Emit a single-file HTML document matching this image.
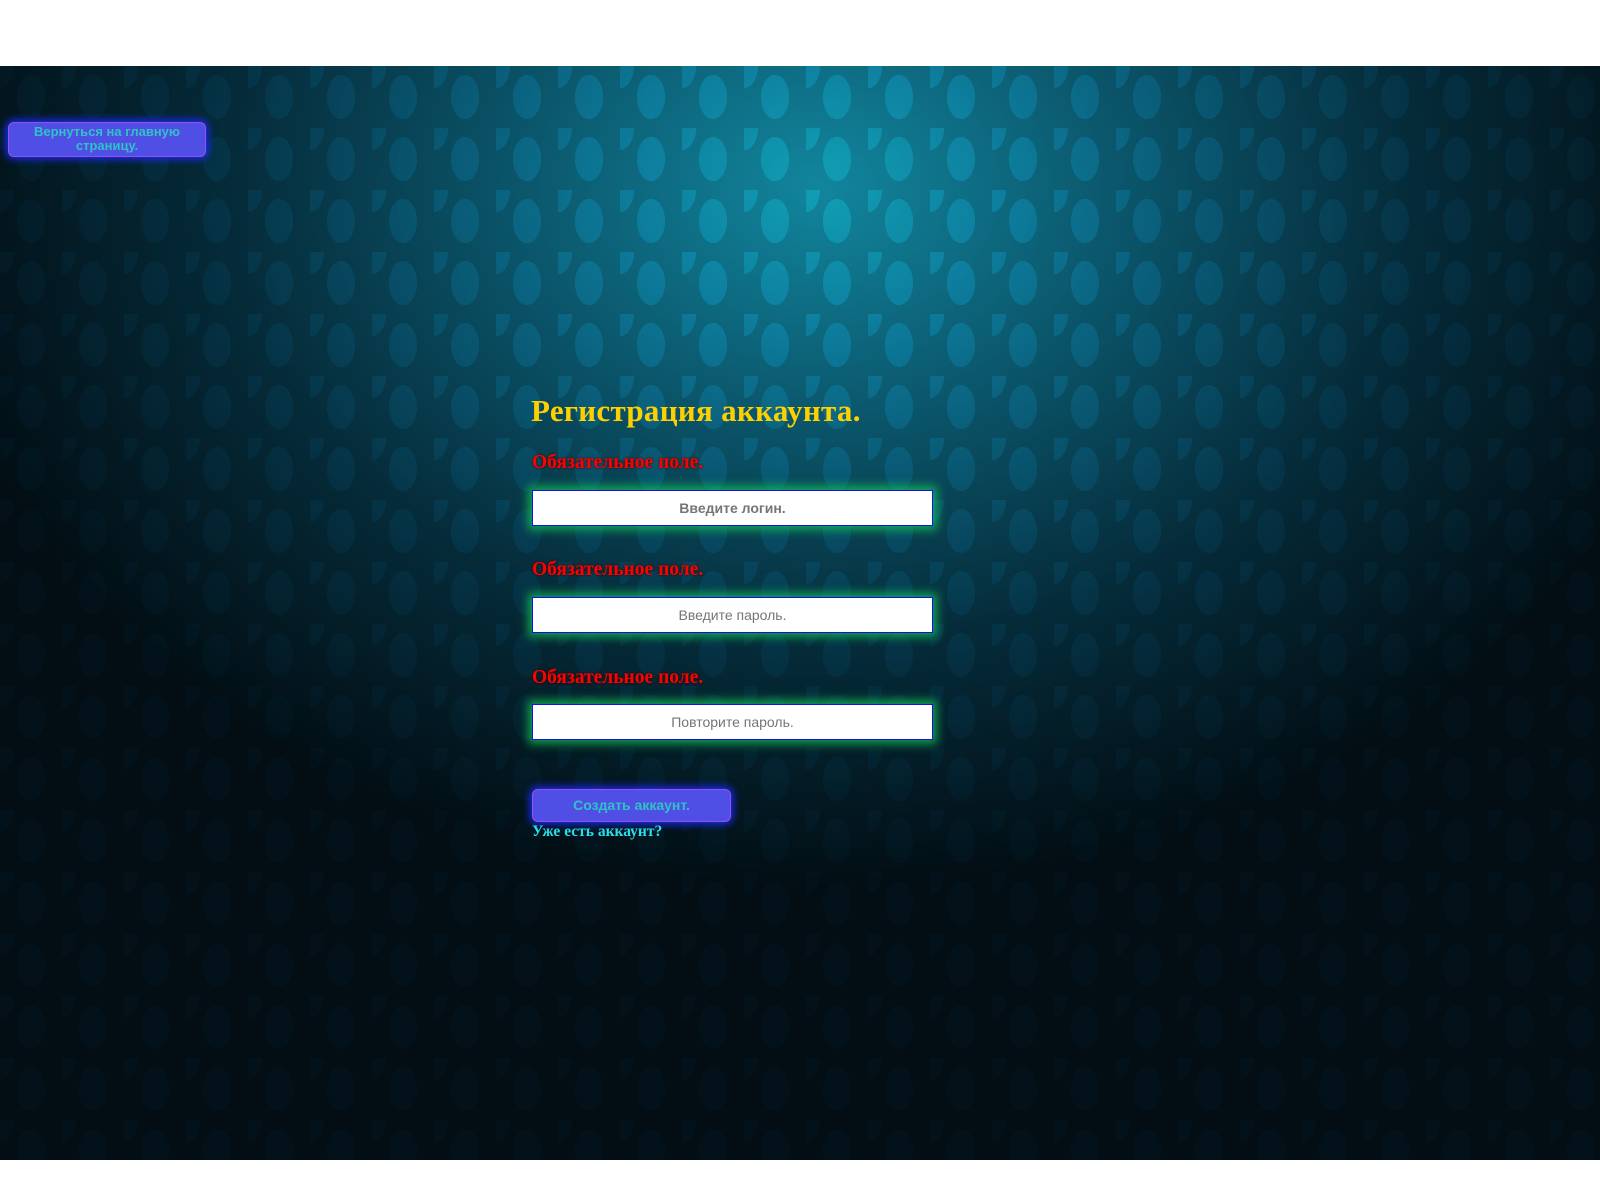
<!DOCTYPE html>
<html><head><meta charset="utf-8"><style>
html,body{margin:0;padding:0;width:1600px;height:1200px;background:#fff;overflow:hidden;position:relative}
.bg{position:absolute;left:0;top:66px;width:1600px;height:1094px;
background:
radial-gradient(ellipse 900px 700px at 820px 120px, rgba(18,140,165,0.95) 0%, rgba(12,95,118,0.85) 35%, rgba(6,50,66,0.8) 65%, rgba(2,14,20,0.95) 100%),
#02121a;}
.pat{position:absolute;left:0;top:66px;width:1600px;height:1094px;opacity:.3;mix-blend-mode:overlay;
background-image:radial-gradient(ellipse 14px 22px at 50% 50%, rgba(120,220,240,.9) 0 100%, transparent 101%),
radial-gradient(ellipse 14px 22px at 0 0, rgba(120,220,240,.9) 0 100%, transparent 101%);
background-size:62px 62px;}
.back{position:absolute;left:8px;top:122px;width:196px;height:31px;background:#4f4fe6;border:1px solid #9a4fe8;border-radius:6px;box-shadow:0 0 8px 2px #1a2cff;color:#2fc3c3;font:bold 13px/14px "Liberation Sans",sans-serif;text-align:center;padding-top:2px;box-sizing:content-box}
h1{position:absolute;left:531px;top:393px;margin:0;font:bold 31px "Liberation Serif",serif;color:#ffd000;white-space:nowrap;letter-spacing:.3px}
.lbl{position:absolute;left:532px;font:bold 19.5px "Liberation Serif",serif;color:#ff0000;white-space:nowrap;text-shadow:0 0 2px #300}
.inp{position:absolute;left:532px;width:399px;height:34px;background:#fff;border:1px solid #1010f0;box-shadow:0 0 9px 4px rgba(20,200,90,.75);font:14px/34px "Liberation Sans",sans-serif;color:#757575;text-align:center}
.btn{position:absolute;left:532px;top:789px;width:197px;height:31px;background:#4f4fe6;border:1px solid #9a4fe8;border-radius:6px;box-shadow:0 0 8px 2px #1a2cff;color:#2fc3c3;font:bold 14px/31px "Liberation Sans",sans-serif;text-align:center}
.link{position:absolute;left:532px;top:823px;font:bold 15.5px "Liberation Serif",serif;color:#25e0e8}
</style></head><body>
<div class="bg"></div><div class="pat"></div>
<div class="back">Вернуться на главную<br>страницу.</div>
<h1>Регистрация аккаунта.</h1>
<div class="lbl" style="top:452px">Обязательное поле.</div>
<div class="inp" style="top:490px;font-weight:bold">Введите логин.</div>
<div class="lbl" style="top:559px">Обязательное поле.</div>
<div class="inp" style="top:597px">Введите пароль.</div>
<div class="lbl" style="top:667px">Обязательное поле.</div>
<div class="inp" style="top:704px">Повторите пароль.</div>
<div class="btn">Создать аккаунт.</div>
<div class="link">Уже есть аккаунт?</div>
</body></html>
